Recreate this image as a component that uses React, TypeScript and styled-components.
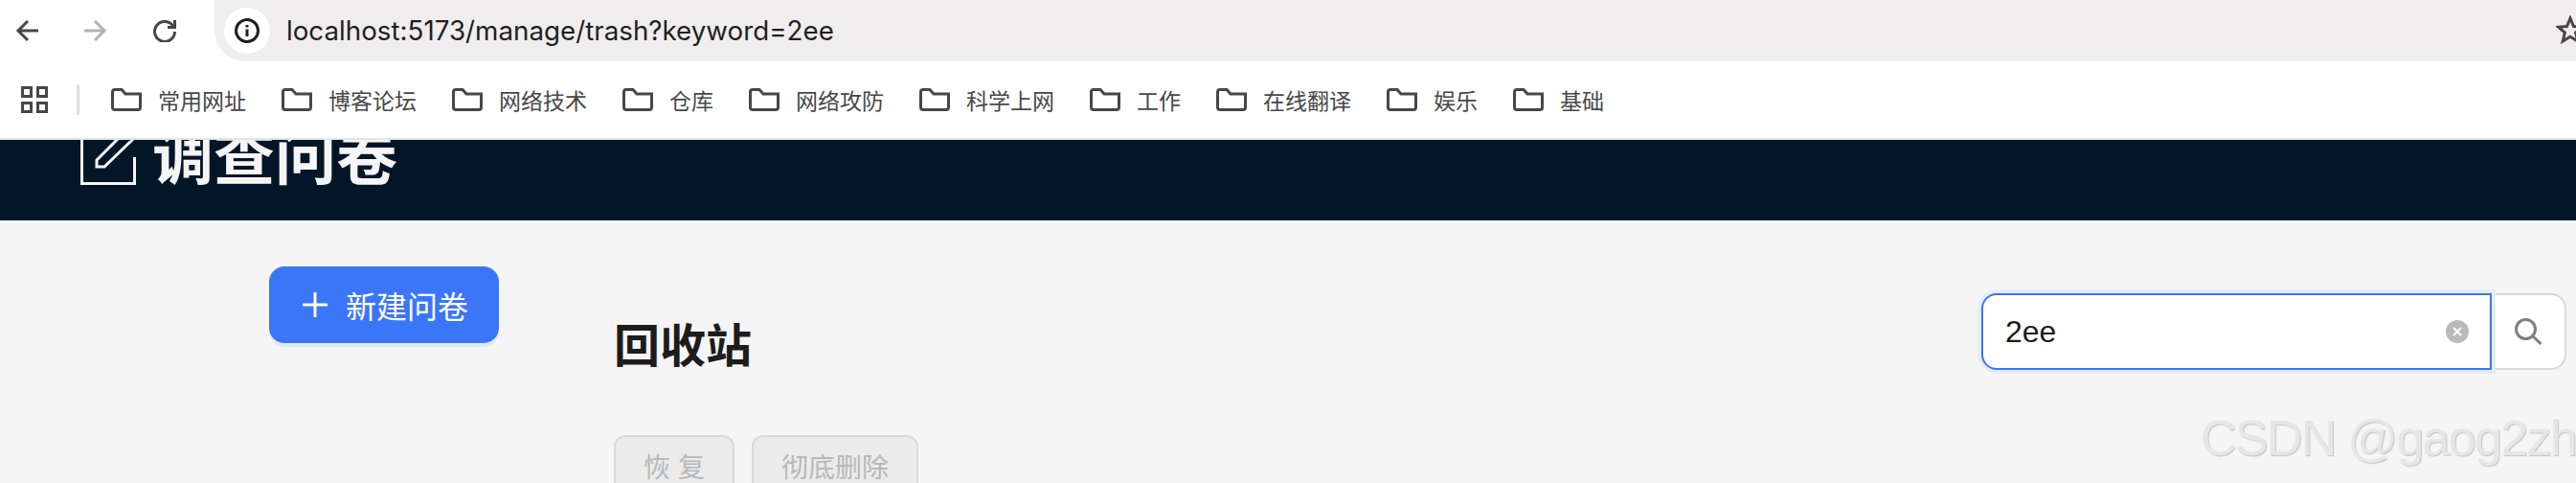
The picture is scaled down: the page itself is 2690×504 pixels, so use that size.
import styled, { createGlobalStyle } from "styled-components";

const GlobalStyle = createGlobalStyle`
  html, body {
    margin: 0;
    padding: 0;
    background: #f5f5f5;
  }
  body {
    font-family: "Liberation Sans", "Noto Sans CJK SC", sans-serif;
  }
`;

const cjk = `"Liberation Sans", "Noto Sans CJK SC", sans-serif`;

const Page = styled.div`
  position: relative;
  width: 2690px;
  height: 504px;
  overflow: hidden;
  background: #f5f5f5;
`;

const TopBar = styled.div`
  display: flex;
  align-items: center;
  height: 64px;
  background: #fff;
`;

const NavGroup = styled.div`
  display: flex;
  align-items: center;
  gap: 48px;
  width: 224px;
  padding-left: 16px;
  box-sizing: border-box;
`;

const NavIcon = styled.svg<{ $muted?: boolean }>`
  display: block;
  width: 24px;
  height: 24px;
  fill: none;
  stroke: ${(p) => (p.$muted ? "#b3b3b3" : "#474747")};
  stroke-width: 3;
`;

const AddressBar = styled.div`
  flex: 1;
  display: flex;
  align-items: center;
  height: 64px;
  padding-left: 10px;
  background: #efedee;
  border-radius: 0 0 0 32px;
`;

const InfoBadge = styled.div`
  display: flex;
  align-items: center;
  justify-content: center;
  width: 48px;
  height: 48px;
  border-radius: 50%;
  background: #fff;
`;

const Url = styled.span`
  flex: 1;
  margin-left: 17px;
  font-family: Inter, sans-serif;
  font-size: 27.75px;
  line-height: 64px;
  color: #1f1f1f;
`;

const Star = styled.svg`
  display: block;
  flex: none;
  width: 30px;
  height: 30px;
  margin: 0 -9px 2px 0;
  fill: none;
  stroke: #474747;
  stroke-width: 3;
`;

const BookmarkBar = styled.div`
  display: flex;
  align-items: center;
  height: 80px;
  padding-left: 22px;
  background: #fff;
  border-bottom: 2px solid #e5e5e5;
`;

const Separator = styled.div`
  width: 3px;
  height: 32px;
  margin: 0 33px 0 30px;
  border-radius: 2px;
  background: #e0e0e0;
`;

const Bookmark = styled.div`
  display: flex;
  align-items: center;
  gap: 17px;
  margin-right: 37px;
  font-family: ${cjk};
  font-size: 23px;
  color: #474747;
  white-space: nowrap;
`;

const FolderIcon = styled.svg`
  display: block;
  width: 32px;
  height: 24px;
  fill: none;
  stroke: #474747;
  stroke-width: 3;
`;

const Header = styled.header`
  display: flex;
  align-items: flex-end;
  gap: 17px;
  height: 84px;
  padding: 0 0 37px 84px;
  box-sizing: border-box;
  overflow: hidden;
  background: #031627;
`;

const Brand = styled.div`
  flex: none;
  margin-bottom: -4px;
  font-family: ${cjk};
  font-size: 64px;
  font-weight: 700;
  line-height: 64px;
  color: #f5f5f5;
  white-space: nowrap;
`;

const BrandIcon = styled.svg`
  display: block;
  flex: none;
  width: 58px;
  height: 58px;
  fill: none;
  stroke: #f5f5f5;
  stroke-width: 3;
`;

const Main = styled.main`
  display: flex;
  align-items: flex-start;
`;

const Sidebar = styled.aside`
  flex: none;
  width: 641px;
  padding: 48px 0 0 281px;
  box-sizing: border-box;
`;

const PrimaryButton = styled.button`
  display: flex;
  align-items: center;
  gap: 19px;
  width: 240px;
  height: 80px;
  padding: 0 0 0 35px;
  box-sizing: border-box;
  border: 0;
  border-radius: 16px;
  background: #3b76f8;
  box-shadow: 0 4px 0 rgba(5, 145, 255, 0.1);
  font-family: ${cjk};
  font-size: 32px;
  color: #fff;
`;

const Content = styled.section`
  flex: 1;
  padding: 76px 10px 0 0;
`;

const ContentTop = styled.div`
  display: flex;
  justify-content: space-between;
  align-items: flex-start;
`;

const Title = styled.h2`
  margin: 24px 0 0;
  font-family: ${cjk};
  font-size: 48px;
  font-weight: 700;
  line-height: 64px;
  color: #1c1c1c;
`;

const SearchGroup = styled.div`
  display: flex;
  width: 611px;
  height: 80px;
`;

const SearchInput = styled.div`
  position: relative;
  z-index: 1;
  flex: 1;
  display: flex;
  align-items: center;
  justify-content: space-between;
  padding: 0 22px 0 23px;
  box-sizing: border-box;
  border: 2px solid #3a76f6;
  border-radius: 16px 0 0 16px;
  background: #fff;
  box-shadow: 0 0 0 4px #e5edf7;
  font-size: 32px;
  color: #1c1c1c;
`;

const ClearIcon = styled.svg`
  display: block;
  width: 24px;
  height: 24px;
`;

const SearchButton = styled.div`
  display: flex;
  align-items: center;
  justify-content: center;
  flex: none;
  width: 78px;
  box-sizing: border-box;
  border: 2px solid #d9d9d9;
  border-left: 0;
  border-radius: 0 16px 16px 0;
  background: #fff;
`;

const SearchIcon = styled.svg`
  display: block;
  width: 28px;
  height: 28px;
  fill: none;
  stroke: #808080;
  stroke-width: 3;
`;

const Actions = styled.div`
  display: flex;
  gap: 18px;
  margin-top: 60px;
`;

const DisabledButton = styled.button<{ $width: number }>`
  flex: none;
  width: ${(p) => p.$width}px;
  height: 64px;
  padding: 0;
  border: 2px solid #d9d9d9;
  border-radius: 12px;
  background: #ebebeb;
  font-family: ${cjk};
  font-size: 28px;
  color: #b8b8b8;
`;

const Watermark = styled.div`
  position: absolute;
  left: 2298px;
  top: 427px;
  font-family: "Liberation Sans", sans-serif;
  font-size: 52px;
  letter-spacing: -1.7px;
  line-height: 60px;
  color: #e6e6e6;
  text-shadow: 1px 1px 1px #c4c4c4;
  white-space: nowrap;
`;

const Folder = () => (
  <FolderIcon viewBox="0 0 32 24">
    <path d="M1.5 4Q1.5 1.5 4 1.5H11L15 6H30.5V20Q30.5 22.5 28 22.5H4Q1.5 22.5 1.5 20Z" />
  </FolderIcon>
);

const bookmarks = ["常用网址", "博客论坛", "网络技术", "仓库", "网络攻防", "科学上网", "工作", "在线翻译", "娱乐", "基础"];

export default function App() {
  return (
    <Page>
      <GlobalStyle />
      <TopBar>
        <NavGroup>
          <NavIcon viewBox="0 0 24 24">
            <path d="M24 12H3M13 2L3 12L13 22" />
          </NavIcon>
          <NavIcon viewBox="0 0 24 24" $muted>
            <path d="M0 12H21M11 2L21 12L11 22" />
          </NavIcon>
          <NavIcon viewBox="0 0 24 24">
            <path d="M21 7.5A10.5 10.5 0 1 0 22.5 13M22.5 1V8.5H15" />
          </NavIcon>
        </NavGroup>
        <AddressBar>
          <InfoBadge>
            <svg width="26" height="26" viewBox="0 0 26 26" fill="none" stroke="#1f1f1f" strokeWidth="3">
              <circle cx="13" cy="13" r="11.5" />
              <path d="M13 11.5V19M13 7V9.5" />
            </svg>
          </InfoBadge>
          <Url>localhost:5173/manage/trash?keyword=2ee</Url>
          <Star viewBox="0 0 30 30">
            <path d="M15 3L18.5 11.5L27.5 12.2L20.6 18.1L22.8 27L15 22.2L7.2 27L9.4 18.1L2.5 12.2L11.5 11.5Z" />
          </Star>
        </AddressBar>
      </TopBar>
      <BookmarkBar>
        <svg width="28" height="28" viewBox="0 0 28 28" fill="none" stroke="#474747" strokeWidth="3">
          <path d="M1.5 1.5H10.5V10.5H1.5ZM17.5 1.5H26.5V10.5H17.5ZM1.5 17.5H10.5V26.5H1.5ZM17.5 17.5H26.5V26.5H17.5Z" />
        </svg>
        <Separator />
        {bookmarks.map((name) => (
          <Bookmark key={name}>
            <Folder />
            {name}
          </Bookmark>
        ))}
      </BookmarkBar>
      <Header>
        <BrandIcon viewBox="0 0 58 58">
          <path d="M30 2H1.5V56.5H56.5V29" />
          <path d="M17 39V32L44 5L54 11L25 39Z" />
        </BrandIcon>
        <Brand>调查问卷</Brand>
      </Header>
      <Main>
        <Sidebar>
          <PrimaryButton>
            <svg width="26" height="26" viewBox="0 0 26 26" fill="none" stroke="#fff" strokeWidth="3">
              <path d="M0 13H26M13 0V26" />
            </svg>
            新建问卷
          </PrimaryButton>
        </Sidebar>
        <Content>
          <ContentTop>
            <Title>回收站</Title>
            <SearchGroup>
              <SearchInput>
                2ee
                <ClearIcon viewBox="0 0 24 24">
                  <circle cx="12" cy="12" r="12" fill="#b9b9b9" />
                  <path d="M8 8L16 16M16 8L8 16" stroke="#fff" strokeWidth="2" />
                </ClearIcon>
              </SearchInput>
              <SearchButton>
                <SearchIcon viewBox="0 0 28 28">
                  <circle cx="11.5" cy="11.5" r="10" />
                  <path d="M18.5 18.5L27.5 27" />
                </SearchIcon>
              </SearchButton>
            </SearchGroup>
          </ContentTop>
          <Actions>
            <DisabledButton $width={126}>恢 复</DisabledButton>
            <DisabledButton $width={174}>彻底删除</DisabledButton>
          </Actions>
        </Content>
      </Main>
      <Watermark>CSDN @gaog2zh</Watermark>
    </Page>
  );
}
